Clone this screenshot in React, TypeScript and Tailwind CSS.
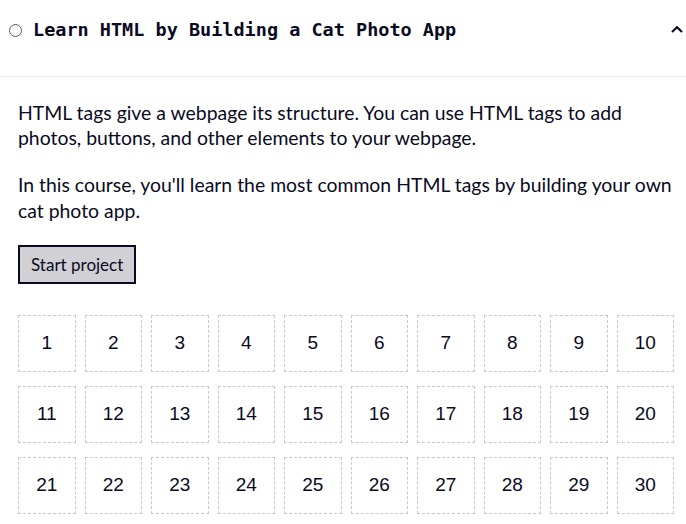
import React from 'react';

const steps = Array.from({ length: 30 }, (_, i) => i + 1);

function StepCell({ n }: { n: number }) {
  return (
    <div className="flex h-[57px] items-center justify-center border border-dashed border-[#c8c8cc] text-[19px] text-[#0a0a23] [font-family:'Liberation_Sans',Arial,sans-serif]">
      {n}
    </div>
  );
}

export default function App() {
  return (
    <div className="min-h-screen bg-white text-[#0a0a23] [font-family:Lato,'Noto_Sans',sans-serif]">
      {/* Header */}
      <div className="border-b border-[#eeeef0] pb-[16px]">
        <div className="flex h-[60px] items-center pl-[9px] pr-[3px]">
          <span className="mr-[11px] h-[13px] w-[13px] rounded-full border border-[#5a5a66]" />
          <h3 className="flex-1 text-[18.5px] font-bold [font-family:'DejaVu_Sans_Mono',monospace]">
            Learn HTML by Building a Cat Photo App
          </h3>
          <svg width="12" height="7" viewBox="0 0 12 7" className="mb-[1px]">
            <polyline points="1,6 6,1.2 11,6" fill="none" stroke="#0a0a23" strokeWidth="2.2" />
          </svg>
        </div>
      </div>

      {/* Body */}
      <div className="pl-[18px] pr-[12px] pt-[23px]">
        <p className="mb-[22px] text-[19.4px] leading-[25px]">
          HTML tags give a webpage its structure. You can use HTML tags to add photos, buttons, and other elements to your webpage.
        </p>
        <p className="mb-[21px] text-[19.4px] leading-[26px]">
          In this course, you'll learn the most common HTML tags by building your own cat photo app.
        </p>
        <button className="block h-[39px] border-2 border-[#0a0a23] bg-[#d0d0d5] px-[11px] text-[17px] text-[#0a0a23]">
          Start project
        </button>

        <div className="mt-[31px] grid grid-cols-10 gap-x-[9px] gap-y-[14px]">
          {steps.map((n) => (
            <StepCell key={n} n={n} />
          ))}
        </div>
      </div>
    </div>
  );
}
